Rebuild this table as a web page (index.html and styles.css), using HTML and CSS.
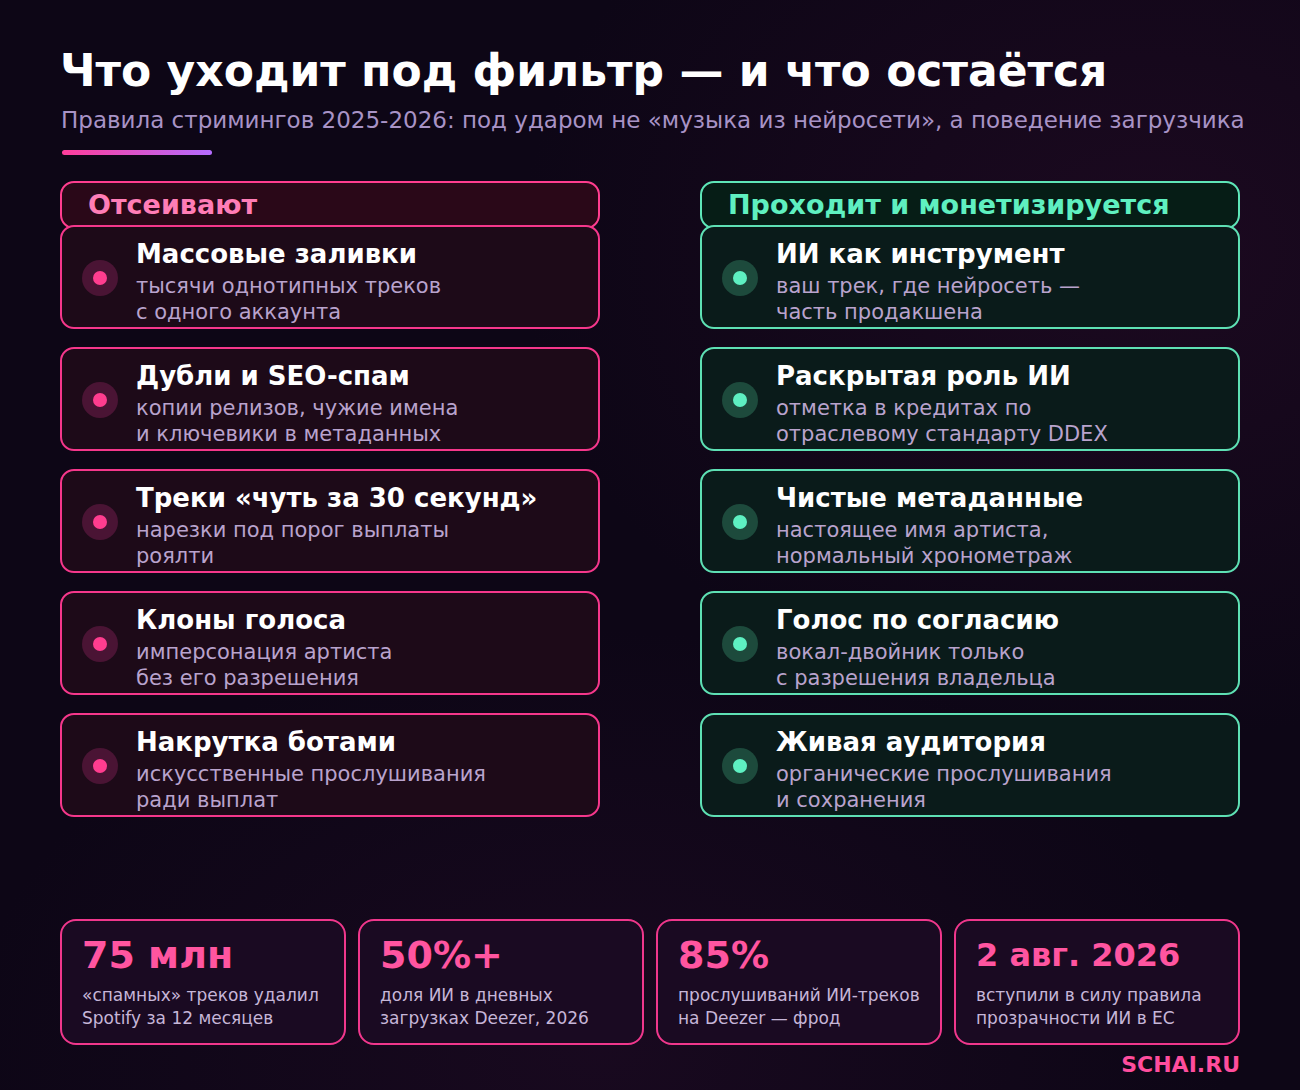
FILE: index.html
```html
<!DOCTYPE html>
<html lang="ru">
<head>
<meta charset="utf-8">
<title>Что уходит под фильтр</title>
<link rel="stylesheet" href="styles.css">
</head>
<body>
<div class="page">
  <h1 class="title">Что уходит под фильтр — и что остаётся</h1>
  <p class="subtitle">Правила стримингов 2025-2026: под ударом не «музыка из нейросети», а поведение загрузчика</p>
  <div class="accent"></div>

  <div class="columns">
    <div class="col bad">
      <div class="col-head">Отсеивают</div>
      <div class="card">
        <div class="dot"><span></span></div>
        <div class="card-text">
          <div class="card-title">Массовые заливки</div>
          <div class="card-desc">тысячи однотипных треков<br>с одного аккаунта</div>
        </div>
      </div>
      <div class="card">
        <div class="dot"><span></span></div>
        <div class="card-text">
          <div class="card-title">Дубли и SEO-спам</div>
          <div class="card-desc">копии релизов, чужие имена<br>и ключевики в метаданных</div>
        </div>
      </div>
      <div class="card">
        <div class="dot"><span></span></div>
        <div class="card-text">
          <div class="card-title">Треки «чуть за 30 секунд»</div>
          <div class="card-desc">нарезки под порог выплаты<br>роялти</div>
        </div>
      </div>
      <div class="card">
        <div class="dot"><span></span></div>
        <div class="card-text">
          <div class="card-title">Клоны голоса</div>
          <div class="card-desc">имперсонация артиста<br>без его разрешения</div>
        </div>
      </div>
      <div class="card">
        <div class="dot"><span></span></div>
        <div class="card-text">
          <div class="card-title">Накрутка ботами</div>
          <div class="card-desc">искусственные прослушивания<br>ради выплат</div>
        </div>
      </div>
    </div>

    <div class="col good">
      <div class="col-head">Проходит и монетизируется</div>
      <div class="card">
        <div class="dot"><span></span></div>
        <div class="card-text">
          <div class="card-title">ИИ как инструмент</div>
          <div class="card-desc">ваш трек, где нейросеть —<br>часть продакшена</div>
        </div>
      </div>
      <div class="card">
        <div class="dot"><span></span></div>
        <div class="card-text">
          <div class="card-title">Раскрытая роль ИИ</div>
          <div class="card-desc">отметка в кредитах по<br>отраслевому стандарту DDEX</div>
        </div>
      </div>
      <div class="card">
        <div class="dot"><span></span></div>
        <div class="card-text">
          <div class="card-title">Чистые метаданные</div>
          <div class="card-desc">настоящее имя артиста,<br>нормальный хронометраж</div>
        </div>
      </div>
      <div class="card">
        <div class="dot"><span></span></div>
        <div class="card-text">
          <div class="card-title">Голос по согласию</div>
          <div class="card-desc">вокал-двойник только<br>с разрешения владельца</div>
        </div>
      </div>
      <div class="card">
        <div class="dot"><span></span></div>
        <div class="card-text">
          <div class="card-title">Живая аудитория</div>
          <div class="card-desc">органические прослушивания<br>и сохранения</div>
        </div>
      </div>
    </div>
  </div>

  <div class="stats">
    <div class="stat">
      <div class="stat-num">75 млн</div>
      <div class="stat-cap">«спамных» треков удалил<br>Spotify за 12 месяцев</div>
    </div>
    <div class="stat">
      <div class="stat-num">50%+</div>
      <div class="stat-cap">доля ИИ в дневных<br>загрузках Deezer, 2026</div>
    </div>
    <div class="stat">
      <div class="stat-num">85%</div>
      <div class="stat-cap">прослушиваний ИИ-треков<br>на Deezer — фрод</div>
    </div>
    <div class="stat">
      <div class="stat-num small">2 авг. 2026</div>
      <div class="stat-cap">вступили в силу правила<br>прозрачности ИИ в ЕС</div>
    </div>
  </div>

  <div class="brand">SCHAI.RU</div>
</div>
</body>
</html>
```

FILE: styles.css
```css
* { box-sizing: border-box; }

html, body {
  margin: 0;
  padding: 0;
}

body {
  width: 1300px;
  height: 1090px;
  overflow: hidden;
  font-family: "DejaVu Sans", "Noto Sans", sans-serif;
  color: #ffffff;
  background-color: #0d0616;
  background-image:
    radial-gradient(ellipse 900px 700px at 1150px 250px, rgba(40, 12, 40, 0.55), rgba(40, 12, 40, 0) 70%),
    radial-gradient(ellipse 900px 600px at 600px 1050px, rgba(36, 12, 40, 0.5), rgba(36, 12, 40, 0) 70%);
}

.page {
  padding: 45px 60px 0 60px;
  display: flex;
  flex-direction: column;
}

.title {
  margin: 0;
  font-size: 44px;
  line-height: 52px;
  font-weight: 700;
  color: #ffffff;
  white-space: nowrap;
}

.subtitle {
  margin: 10px -20px 0 1px;
  font-size: 23px;
  line-height: 27px;
  color: #a893c6;
  white-space: nowrap;
}

.accent {
  margin: 16px 0 0 2px;
  width: 150px;
  height: 5px;
  border-radius: 3px;
  background: linear-gradient(90deg, #ff3d9a 0%, #b46cff 100%);
}

.columns {
  margin-top: 26px;
  display: grid;
  grid-template-columns: 540px 540px;
  column-gap: 100px;
}

.col {
  display: flex;
  flex-direction: column;
}

.col-head {
  height: 48px;
  border: 2px solid;
  border-radius: 14px;
  padding: 0 26px 2px 26px;
  display: flex;
  align-items: center;
  font-size: 27px;
  font-weight: 700;
}

.card {
  height: 104px;
  border: 2px solid;
  border-radius: 14px;
  padding: 10px 20px 0 20px;
  display: flex;
  align-items: center;
  gap: 18px;
  margin-top: 18px;
}

.col-head + .card {
  margin-top: -4px;
}

.dot {
  width: 36px;
  height: 36px;
  border-radius: 50%;
  display: flex;
  align-items: center;
  justify-content: center;
  flex-shrink: 0;
  margin-top: -8px;
}

.dot span {
  width: 14px;
  height: 14px;
  border-radius: 50%;
}

.card-title {
  font-size: 26px;
  line-height: 30px;
  font-weight: 700;
  color: #ffffff;
  white-space: nowrap;
}

.card-desc {
  margin-top: 4px;
  font-size: 21px;
  line-height: 26px;
  color: #b9a3cd;
  white-space: nowrap;
}

/* bad column */
.bad .col-head {
  border-color: #ff3d8f;
  background: #2a0818;
  color: #ff7db6;
}
.bad .card {
  border-color: #f5378b;
  background: #1d0a18;
}
.bad .dot { background: #4a1434; }
.bad .dot span { background: #ff3d8f; }

/* good column */
.good .col-head {
  border-color: #5ee6b8;
  background: #061d16;
  color: #5ff0c0;
}
.good .card {
  border-color: #5ee0b4;
  background: #0a1b1a;
}
.good .dot { background: #1d4a3c; }
.good .dot span { background: #5ef0c2; }

.stats {
  margin-top: 102px;
  display: grid;
  grid-template-columns: repeat(4, 286px);
  column-gap: 12px;
}

.stat {
  height: 126px;
  border: 2px solid #f0378c;
  border-radius: 16px;
  background: #1a0a22;
  padding: 11px 20px 0 20px;
}

.stat-num {
  font-size: 38px;
  line-height: 46px;
  font-weight: 700;
  color: #ff55a0;
  white-space: nowrap;
}

.stat-num.small {
  font-size: 32px;
}

.stat-cap {
  margin-top: 6px;
  font-size: 17px;
  line-height: 23px;
  color: #c6b6d8;
  white-space: nowrap;
}

.brand {
  margin-top: 7px;
  align-self: flex-end;
  font-size: 22px;
  line-height: 26px;
  font-weight: 700;
  color: #ff4d9d;
}
```
